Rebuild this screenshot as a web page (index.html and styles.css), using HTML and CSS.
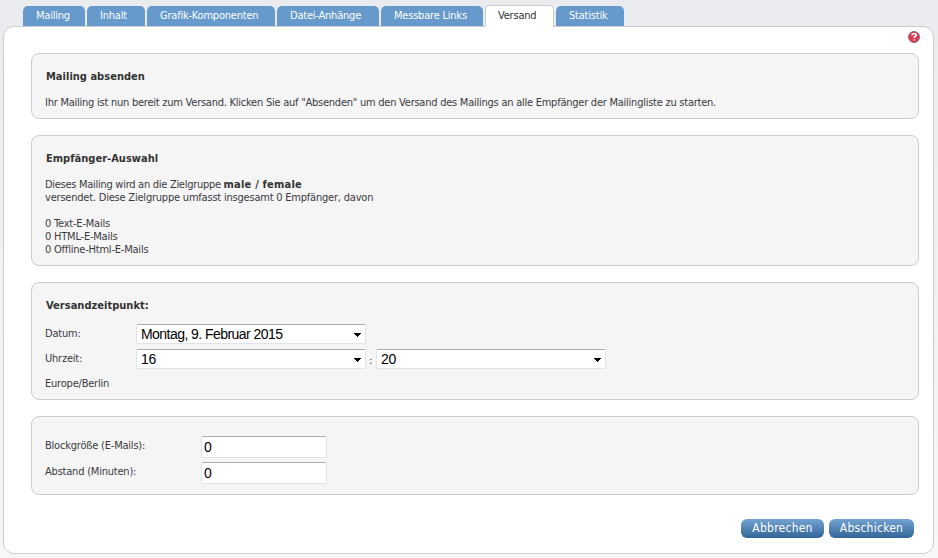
FILE: index.html
```html
<!DOCTYPE html>
<html lang="de">
<head>
<meta charset="utf-8">
<title>Mailing – Versand</title>
<link rel="stylesheet" href="styles.css">
</head>
<body>
<nav class="tabs">
  <a class="tab tab-mailing">Mailing</a>
  <a class="tab tab-content">Inhalt</a>
  <a class="tab tab-graphics">Grafik-Komponenten</a>
  <a class="tab tab-files">Datei-Anhänge</a>
  <a class="tab tab-links">Messbare Links</a>
  <a class="tab tab-send active">Versand</a>
  <a class="tab tab-stats">Statistik</a>
</nav>
<main class="panel">
  <div class="help-row">
    <svg class="help" viewBox="0 0 12 12" role="img" aria-label="Hilfe">
      <circle cx="6" cy="6" r="5.5" fill="#e2334f" stroke="#7d7480"/>
      <path d="M4 4.6V3.5h1v-1h2.3v1h1v1.4h-1v1H6.2v1.3" fill="none" stroke="#fff" stroke-width="1.2"/>
      <path d="M5.5 8.2h1.4v1.3H5.5z" fill="#fff"/>
    </svg>
  </div>
  <section class="box box-intro">
    <h2>Mailing absenden</h2>
    <p class="intro">Ihr Mailing ist nun bereit zum Versand. Klicken Sie auf "Absenden" um den Versand des Mailings an alle Empfänger der Mailingliste zu starten.</p>
  </section>
  <section class="box box-target">
    <h2>Empfänger-Auswahl</h2>
    <p><span class="group">Dieses Mailing wird an die Zielgruppe <b>male / female</b></span><br>versendet. Diese Zielgruppe umfasst insgesamt 0 Empfänger, davon<br><br>0 Text-E-Mails<br>0 HTML-E-Mails<br>0 Offline-Html-E-Mails</p>
  </section>
  <section class="box box-time">
    <h2>Versandzeitpunkt:</h2>
    <div class="row"><label>Datum:</label><div class="select"><span class="date">Montag, 9. Februar 2015</span><svg class="arrow" viewBox="0 0 7 4"><path d="M0 0h7v1H6v1H5v1H4v1H3V3H2V2H1V1H0z"/></svg></div></div>
    <div class="row"><label>Uhrzeit:</label><div class="select"><span>16</span><svg class="arrow" viewBox="0 0 7 4"><path d="M0 0h7v1H6v1H5v1H4v1H3V3H2V2H1V1H0z"/></svg></div><span class="colon">:</span><div class="select"><span>20</span><svg class="arrow" viewBox="0 0 7 4"><path d="M0 0h7v1H6v1H5v1H4v1H3V3H2V2H1V1H0z"/></svg></div></div>
    <div class="row"><label>Europe/Berlin</label></div>
  </section>
  <section class="box box-block">
    <div class="field"><label>Blockgröße (E-Mails):</label><div class="input">0</div></div>
    <div class="field"><label>Abstand (Minuten):</label><div class="input">0</div></div>
  </section>
  <div class="actions">
    <button class="btn btn-cancel">Abbrechen</button>
    <button class="btn btn-send">Abschicken</button>
  </div>
</main>
</body>
</html>
```
FILE: styles.css
```css
* { box-sizing: border-box; }
html { height: 100%; }
body {
  margin: 0;
  height: 558px;
  overflow: hidden;
  padding: 5px 4px 0 3px;
  background: linear-gradient(#e9ebef, #f6f7f9);
  font: 11px/13px "DejaVu Sans Condensed", "DejaVu Sans", sans-serif;
  letter-spacing: -0.21px;
  color: #3a3a3f;
}
.tabs { display: flex; gap: 2px; padding-left: 20px; height: 21px; align-items: flex-end; }
.tab {
  height: 20px;
  padding: 3px 0 0 13px;
  white-space: nowrap;
  color: #fff;
  background: #6699cc;
  border-radius: 5px 5px 0 0;
}
.tab-mailing { width: 62px; }
.tab-content { width: 58px; }
.tab-graphics { width: 128px; }
.tab-files { width: 102px; }
.tab-links { width: 102px; }
.tab-send { width: 69px; }
.tab-stats { width: 68px; }
.tab.active {
  position: relative;
  height: 22px;
  margin-bottom: -1px;
  background: #fff;
  color: #333;
  border: 1px solid #ccc;
  border-bottom: 0;
  padding-left: 12px;
}
.panel {
  height: 528px;
  border: 1px solid #ccc;
  border-radius: 11px;
  background: #fff;
  padding: 0 14px 0 27px;
}
.help-row { display: flex; justify-content: flex-end; height: 26px; padding: 4px 0 0; margin-right: -1px; }
.help { width: 12px; height: 12px; }
.box {
  border: 1px solid #ccc;
  border-radius: 8px;
  background: #f5f5f5;
  padding: 16px 14px 0 13px;
  margin-bottom: 16px;
}
.box-intro { height: 66px; }
.box-target { height: 131px; }
.box-time { height: 118px; }
.box-block { height: 79px; padding-top: 19px; margin-bottom: 0; }
h2 { margin: 0 0 13px 1px; font-size: 11px; line-height: 13px; font-weight: bold; letter-spacing: 0.02px; color: #333; }
p { margin: 0; white-space: nowrap; }
.intro { letter-spacing: -0.243px; }
.group { letter-spacing: -0.28px; }
.group b { letter-spacing: 0.2px; color: #333; }
.row { display: flex; height: 25px; }
.box-time h2 { margin-bottom: 12px; }
.row label { width: 91px; padding-top: 3px; }
.colon { width: 10px; padding: 5px 0 0 3px; }
.select {
  width: 230px;
  height: 20px;
  display: flex;
  justify-content: space-between;
  align-items: center;
  padding: 0 4px;
  background: #fff;
  border: 1px solid #dfe3ea;
  border-top-color: #abadb3;
  border-radius: 2px;
  font: 14px/18px "Liberation Sans", Arial, sans-serif;
  letter-spacing: -0.4px;
  color: #000;
}
.date { letter-spacing: -0.55px; }
.arrow { width: 7px; height: 4px; margin-top: 2px; }
.field { display: flex; height: 26px; }
.field label { width: 156px; padding-top: 3px; }
.input {
  width: 126px;
  height: 22px;
  padding: 1px 2px 0;
  background: #fff;
  border: 1px solid #dfe3ea;
  border-top-color: #abadb3;
  border-radius: 2px;
  font: 14px/18px "Liberation Sans", Arial, sans-serif;
  color: #000;
}
.actions { display: flex; justify-content: flex-end; gap: 5px; padding-top: 24px; margin-right: 5px; }
.btn {
  height: 19px;
  padding: 0 0 1px;
  border: 0;
  border-radius: 6px;
  background: linear-gradient(#73a2d1, #316698);
  color: #fff;
  font: 12px/18px "DejaVu Sans Condensed", "DejaVu Sans", sans-serif;
  letter-spacing: 0.25px;
}
.btn-cancel { width: 83px; }
.btn-send { width: 85px; }
```
